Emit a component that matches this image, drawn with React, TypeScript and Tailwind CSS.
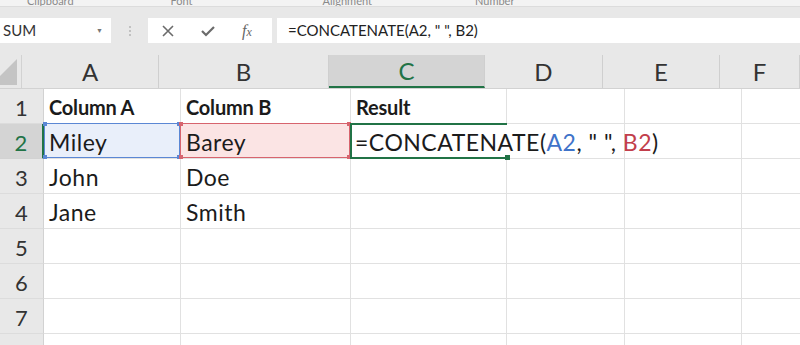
import React from "react";

const cols = [
  { key: "A", w: "w-[137px]" },
  { key: "B", w: "w-[170px]" },
  { key: "C", w: "w-[156px]" },
  { key: "D", w: "w-[118px]" },
  { key: "E", w: "w-[117px]" },
  { key: "F", w: "w-[80px]" },
];

const data: Record<string, string> = {
  A1: "Column A",
  B1: "Column B",
  C1: "Result",
  A2: "Miley",
  B2: "Barey",
  A3: "John",
  B3: "Doe",
  A4: "Jane",
  B4: "Smith",
};

const Handles: React.FC<{ color: string }> = ({ color }) => (
  <>
    <span className={`absolute -left-[2px] -top-[2px] w-[4px] h-[4px] ${color}`} />
    <span className={`absolute -right-[2px] -top-[2px] w-[4px] h-[4px] ${color}`} />
    <span className={`absolute -left-[2px] -bottom-[2px] w-[4px] h-[4px] ${color}`} />
    <span className={`absolute -right-[2px] -bottom-[2px] w-[4px] h-[4px] ${color}`} />
  </>
);

const Formula: React.FC = () => (
  <span>
    {"=CONCATENATE("}
    <span className="text-[#3f73c9]">A2</span>
    {', " ", '}
    <span className="text-[#c23e4b]">B2</span>
    {")"}
  </span>
);

const cellText = "text-[23px] tracking-[0.5px]";

const App: React.FC = () => {
  const rows = [1, 2, 3, 4, 5, 6, 7, 8];

  return (
    <div className="w-[800px] h-[345px] overflow-hidden bg-white font-['Lato',sans-serif] text-[#1b1b1b]">
      {/* ribbon group labels, cut off at the top */}
      <div className="h-[7px] overflow-hidden bg-[#f3f3f3] border-b border-[#dcdcdc] text-[11px] text-[#8a8a8a] leading-none">
        <div className="flex -mt-[5px]">
          <span className="ml-[27px]">Clipboard</span>
          <span className="ml-[97px]">Font</span>
          <span className="ml-[130px]">Alignment</span>
          <span className="ml-[103px]">Number</span>
        </div>
      </div>

      {/* formula bar */}
      <div className="h-[48px] bg-[#e8e8e8] pt-[11px]">
        <div className="flex h-[25px] items-stretch">
          <div className="w-[111px] bg-white flex items-center justify-between pl-[3px] pr-[8px] text-[15px] text-[#333]">
            <span>SUM</span>
            <span className="text-[7px] text-[#777]">▼</span>
          </div>
          <div className="w-[37px] flex flex-col items-center justify-center gap-[2px]">
            <span className="w-[2px] h-[2px] bg-[#b5b5b5] rounded-full" />
            <span className="w-[2px] h-[2px] bg-[#b5b5b5] rounded-full" />
            <span className="w-[2px] h-[2px] bg-[#b5b5b5] rounded-full" />
          </div>
          <div className="w-[124px] bg-white flex items-center">
            <svg className="ml-[14px]" width="12" height="12" viewBox="0 0 12 12">
              <path d="M1 1L11 11M11 1L1 11" stroke="#6b6b6b" strokeWidth="1.6" fill="none" />
            </svg>
            <svg className="ml-[27px]" width="14" height="12" viewBox="0 0 14 12">
              <path d="M1 6L5 10L13 2" stroke="#6b6b6b" strokeWidth="2.2" fill="none" />
            </svg>
            <span className="ml-[27px] font-['Liberation_Serif',serif] italic text-[16px] text-[#666]">
              f<span className="text-[12px]">x</span>
            </span>
          </div>
          <div className="w-[5px]" />
          <div className="flex-1 bg-white flex items-center pl-[11px] text-[15px] text-[#222]">
            <span>=CONCATENATE(A2, " ", B2)</span>
          </div>
        </div>
      </div>

      {/* sheet */}
      <div className="flex flex-col">
        <div className="flex h-[34px] bg-[#e8e8e8] border-b border-[#d2d2d2]">
          <div className="w-[44px] relative border-r border-[#d2d2d2]">
            <svg className="absolute right-[4px] bottom-[3px]" width="26" height="26" viewBox="0 0 26 26">
              <path d="M26 0L26 26L0 26Z" fill="#c4c4c4" />
            </svg>
          </div>
          {cols.map((c) => (
            <div
              key={c.key}
              className={`${c.w} shrink-0 flex items-center justify-center text-[24px] border-r border-[#cfcfcf] ${
                c.key === "C"
                  ? "bg-[#d4d4d4] text-[#217346] border-b-2 border-b-[#217346]"
                  : "text-[#333]"
              }`}
            >
              {c.key}
            </div>
          ))}
        </div>

        {rows.map((r) => (
          <div key={r} className="flex h-[35px] shrink-0">
            <div
              className={`w-[44px] shrink-0 flex items-center justify-center pt-[2px] text-[22px] border-b ${
                r === 2
                  ? "bg-[#d4d4d4] text-[#217346] border-r-2 border-r-[#217346] border-b-[#d2d2d2]"
                  : "bg-[#e8e8e8] text-[#333] border-r border-r-[#d2d2d2] border-b-[#dcdcdc]"
              }`}
            >
              {r}
            </div>
            {cols.map((c) => {
              const id = `${c.key}${r}`;
              const text = data[id];
              if (id === "A2") {
                return (
                  <div key={id} className={`${c.w} shrink-0 relative bg-[#e9effa] border-r border-b border-[#e1e1e1]`}>
                    <div className="absolute inset-0 -top-px border border-[#5b87d4]">
                      <Handles color="bg-[#5b87d4]" />
                    </div>
                    <div className={`h-full flex items-center pl-[5px] pt-[2px] ${cellText}`}>
                      <span>{text}</span>
                    </div>
                  </div>
                );
              }
              if (id === "B2") {
                return (
                  <div key={id} className={`${c.w} shrink-0 relative bg-[#fbe4e4] border-r border-b border-[#e1e1e1]`}>
                    <div className="absolute -left-px inset-y-0 right-0 -top-px border border-[#d7646e]">
                      <Handles color="bg-[#d7646e]" />
                    </div>
                    <div className={`h-full flex items-center pl-[5px] pt-[2px] ${cellText}`}>
                      <span>{text}</span>
                    </div>
                  </div>
                );
              }
              if (id === "C2") {
                return (
                  <div key={id} className={`${c.w} shrink-0 relative z-10`}>
                    <div className="absolute inset-0 -top-px -left-px border-2 border-r-0 border-[#217346]">
                      <span className="absolute -right-[3px] -bottom-[3px] w-[5px] h-[5px] bg-[#217346]" />
                    </div>
                    <div className={`h-full flex items-center pl-[4px] pt-[2px] whitespace-nowrap ${cellText}`}>
                      <Formula />
                    </div>
                  </div>
                );
              }
              return (
                <div
                  key={id}
                  className={`${c.w} shrink-0 flex items-center pl-[5px] pt-[2px] border-r border-b border-[#e1e1e1] ${
                    r === 1 ? "font-bold text-[20px] tracking-[-0.2px]" : cellText
                  }`}
                >
                  {text && <span>{text}</span>}
                </div>
              );
            })}
          </div>
        ))}
      </div>
    </div>
  );
};

export default App;
